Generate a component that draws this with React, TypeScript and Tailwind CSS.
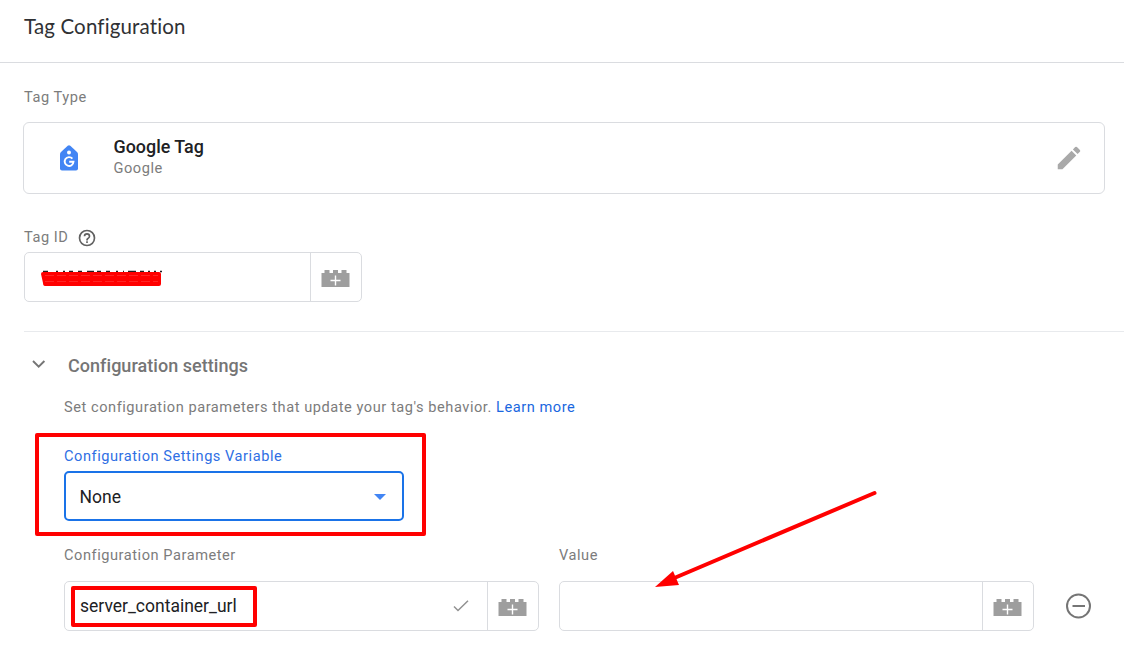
import type { ReactNode } from 'react';

function BrickIcon() {
  return (
    <svg width="29" height="17" viewBox="0 0 29 17" className="block shrink-0">
      <path d="M.5 3h3V0h5v3H12V0h5v3h3.500V0h5v3h3v14H.5z" fill="#9e9e9e" />
      <path d="M14.500 5.500v10M9.500 10.500h10" stroke="#fff" strokeWidth="1.400" />
    </svg>
  );
}

function VariableField({ children, className }: { children?: ReactNode; className: string }) {
  return (
    <div className={`flex h-[50px] rounded-[5px] border border-[#dadce0] ${className}`}>
      <div className="flex min-w-0 flex-1 items-center pl-[15px]">{children}</div>
      <div className="flex w-[51px] items-center border-l border-[#dadce0] pl-[10px] pt-[3px]">
        <BrickIcon />
      </div>
    </div>
  );
}

function Label({ children, className = 'text-[#7c7c7c]' }: { children: ReactNode; className?: string }) {
  return (
    <div className={`h-5 whitespace-nowrap text-[14.6px] leading-5 tracking-[0.545px] ${className}`}>{children}</div>
  );
}

export default function App() {
  return (
    <div className="relative h-[649px] w-[1124px] overflow-hidden bg-white font-['Roboto',sans-serif] text-[#757575]">
      <header className="h-[63px] border-b border-[#dadce0] pl-6 pt-[13px]">
        <h1 className="font-['Lato',sans-serif] text-[20.500px] leading-[26px] tracking-[0.150px] text-[#303134]">
          Tag Configuration
        </h1>
      </header>

      <section className="pl-6 pt-6">
        <Label>Tag Type</Label>
        <div className="-ml-px mt-[15px] flex h-[72px] w-[1082px] items-center rounded-[6px] border border-[#dadce0] pl-9 pr-5">
          <svg width="18" height="26" viewBox="0 0 18 26" className="block shrink-0">
            <path d="M1 7 7.700.8q1.300-1.100 2.600 0L17 7q1 1 1 2.300V23.500q0 2-2 2H2q-2 0-2-2V9.300Q0 8 1 7z" fill="#4285f4" />
            <circle cx="9" cy="7.500" r="2" fill="#fff" />
            <path d="M12.400 13.600a4.400 4.400 0 1 0 1.100 3.200H9.200" fill="none" stroke="#fff" strokeWidth="1.900" />
          </svg>
          <div className="ml-[35.500px] flex-1 pb-[3px]">
            <div className="text-[17.900px] font-medium leading-[22px] text-[#202124]">Google Tag</div>
            <Label>Google</Label>
          </div>
          <svg width="30" height="30" viewBox="0 0 24 24" className="block" fill="#a9a9a9">
            <path d="M3 17.250V21h3.750L17.810 9.940l-3.750-3.750zM20.710 7.040a1 1 0 0 0 0-1.410l-2.340-2.340a1 1 0 0 0-1.410 0l-1.830 1.830 3.750 3.750z" />
          </svg>
        </div>

        <div className="mt-[33px] flex h-5 items-center">
          <Label>Tag ID</Label>
          <svg width="20" height="20" viewBox="0 0 24 24" className="ml-[9px] mt-[2px] block" fill="#616161">
            <path d="M11 18h2v-2h-2zm1-16a10 10 0 1 0 0 20 10 10 0 0 0 0-20m0 18a8 8 0 1 1 0-16 8 8 0 0 1 0 16m0-14a4 4 0 0 0-4 4h2a2 2 0 1 1 4 0c0 2-3 1.750-3 5h2c0-2.250 3-2.500 3-5a4 4 0 0 0-4-4" />
          </svg>
        </div>
        <VariableField className="mt-[5px] w-[338px]">
          <svg width="122" height="16" viewBox="0 0 122 16" className="mt-px block">
            <path d="M3 1.500h5M16 1.500h2m5 0h2m4 0h4m5 0h4m5 0h7m3 0h4m5 0h4m6 0h2m5 0h1m4 0h8m4 0h4m4 0h2m4 0h2m4 0h4" stroke="#202124" strokeWidth="1.600" />
            <path d="M1 4q0-2 2-2h116q2 0 2 2v10q0 2-2 2H5q-2 0-2-3z" fill="#f00" />
            <path d="M5 5.500h113M5 11.500h113" stroke="#ff6b6b" strokeWidth=".35" strokeDasharray="9 3" />
          </svg>
        </VariableField>
      </section>

      <section className="ml-6 mt-[29px] border-t border-[#e8eaed]">
        <div className="mt-[22px] flex h-6 items-center pl-[7px]">
          <svg width="16" height="16" viewBox="0 0 16 16" className="mb-[5px] block">
            <path d="m2 5 5.700 5.700L13.400 5" fill="none" stroke="#757575" strokeWidth="1.900" />
          </svg>
          <h2 className="ml-[21px] text-[18px] font-medium leading-6 tracking-[0.040px]">Configuration settings</h2>
        </div>
        <div className="pl-10">
          <Label className="mt-[19px] text-[#7c7c7c]">
            Set configuration parameters that update your tag's behavior.{' '}
            <span className="text-[#1a67e0]">Learn more</span>
          </Label>
          <Label className="mt-[29px] text-[#2f6fe4]">Configuration Settings Variable</Label>
          <div className="mt-[5px] flex h-[50px] w-[340px] items-center justify-between rounded-[5px] border-2 border-[#1a73e8] pl-[13.500px] pr-4">
            <span className="mt-[2px] text-[17.500px] text-[#202124]">None</span>
            <svg width="12" height="6" viewBox="0 0 12 6" className="mt-px block">
              <path d="M0 0h12L6 6z" fill="#4285f4" />
            </svg>
          </div>
          <div className="mt-6 flex">
            <div className="w-[475px]">
              <Label>Configuration Parameter</Label>
              <VariableField className="mt-4">
                <span className="text-[17.500px] text-[#202124]">server_container_url</span>
                <svg width="16" height="12" viewBox="0 0 16 12" className="ml-auto mr-[18px] block">
                  <path d="m1 6.500 4 4L15 .8" fill="none" stroke="#919191" strokeWidth="1.500" />
                </svg>
              </VariableField>
            </div>
            <div className="ml-5 w-[475px]">
              <Label>Value</Label>
              <VariableField className="mt-4" />
            </div>
            <svg width="26" height="26" viewBox="0 0 26 26" className="ml-8 mt-12 block" fill="none" stroke="#757575">
              <circle cx="12.500" cy="13" r="11.500" strokeWidth="2" />
              <path d="M6.500 13h12.500" strokeWidth="2" />
            </svg>
          </div>
        </div>
      </section>

      <div className="absolute left-[35px] top-[433px] h-[103px] w-[391px] rounded-[2px] border-4 border-[#f00]" />
      <div className="absolute left-[71px] top-[586px] h-[41px] w-[186px] rounded-[2px] border-4 border-[#f00]" />
      <svg width="224" height="102" viewBox="0 0 224 102" className="absolute left-[655px] top-[488px]">
        <path d="M219.500 5 17 91" stroke="#f00" strokeWidth="4" strokeLinecap="round" />
        <path d="m0 99 18-16 6 14z" fill="#f00" />
      </svg>
    </div>
  );
}
